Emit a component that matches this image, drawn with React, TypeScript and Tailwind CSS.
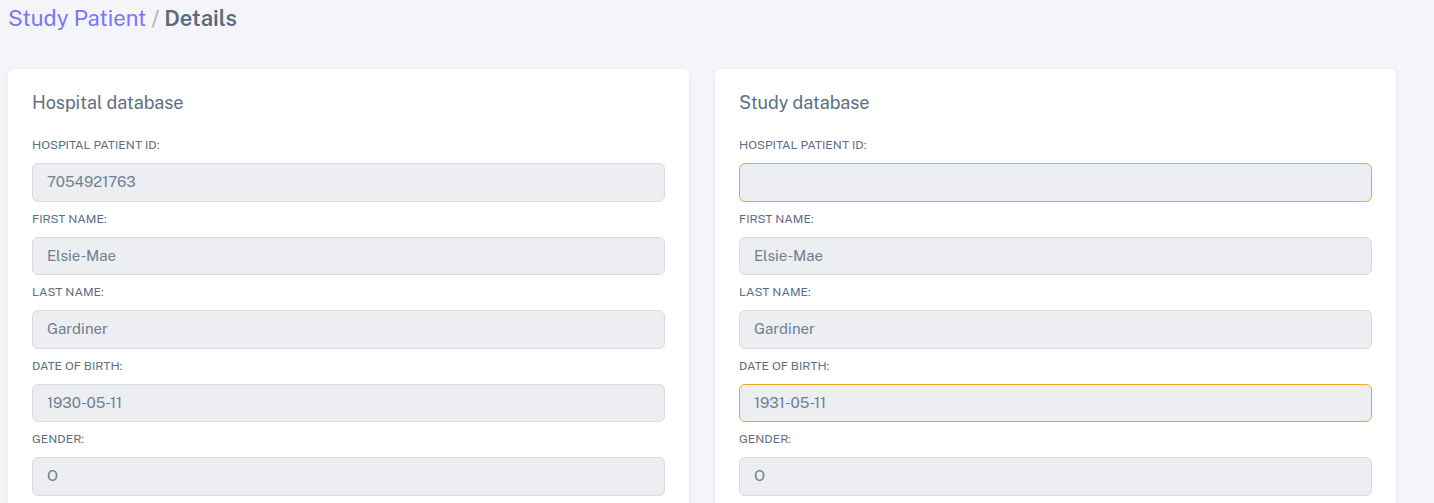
import React from "react";

const fields = [
  { label: "HOSPITAL PATIENT ID:", left: "7054921763", right: "", rightWarn: true },
  { label: "FIRST NAME:", left: "Elsie-Mae", right: "Elsie-Mae", rightWarn: false },
  { label: "LAST NAME:", left: "Gardiner", right: "Gardiner", rightWarn: false },
  { label: "DATE OF BIRTH:", left: "1930-05-11", right: "1931-05-11", rightWarn: true },
  { label: "GENDER:", left: "O", right: "O", rightWarn: false },
];

function Card({ title, side }: { title: string; side: "left" | "right" }) {
  return (
    <div className="bg-white rounded-md shadow-[0_2px_6px_rgba(67,89,113,0.08)] px-6 pt-[21px] pb-6">
      <div className="text-[18px] leading-[26px] text-[#5d6e82] mb-[21px]">{title}</div>
      <div className="flex flex-col gap-[9px]">
        {fields.map((f) => {
          const value = side === "left" ? f.left : f.right;
          const warn = side === "right" && f.rightWarn;
          return (
            <div key={f.label} className="flex flex-col">
              <div className="text-[12px] leading-4 text-[#5d6e82] mb-[10px]">{f.label}</div>
              <div
                className={
                  "h-[38.5px] rounded-md bg-[#eceef1] flex items-center px-[14px] text-[15px] text-[#6f7f91] border " +
                  (warn ? "border-[#f2a824]" : "border-[#d9dbe0]")
                }
              >
                {value}
              </div>
            </div>
          );
        })}
      </div>
    </div>
  );
}

export default function App() {
  return (
    <div
      className="min-h-[503px] bg-[#f4f4f9] px-2 overflow-hidden"
      style={{ fontFamily: "'Public Sans', Inter, 'Noto Sans', sans-serif" }}
    >
      <div className="h-[36px] flex items-center text-[22px]">
        <span className="text-[#7a76f5]">Study Patient</span>
        <span className="text-[#a9b2bd] mx-[5px]">/</span>
        <span className="text-[#566a7f] font-semibold">Details</span>
      </div>
      <div className="grid grid-cols-2 gap-[26px] w-[1388px] mt-[33px]">
        <Card title="Hospital database" side="left" />
        <Card title="Study database" side="right" />
      </div>
    </div>
  );
}
